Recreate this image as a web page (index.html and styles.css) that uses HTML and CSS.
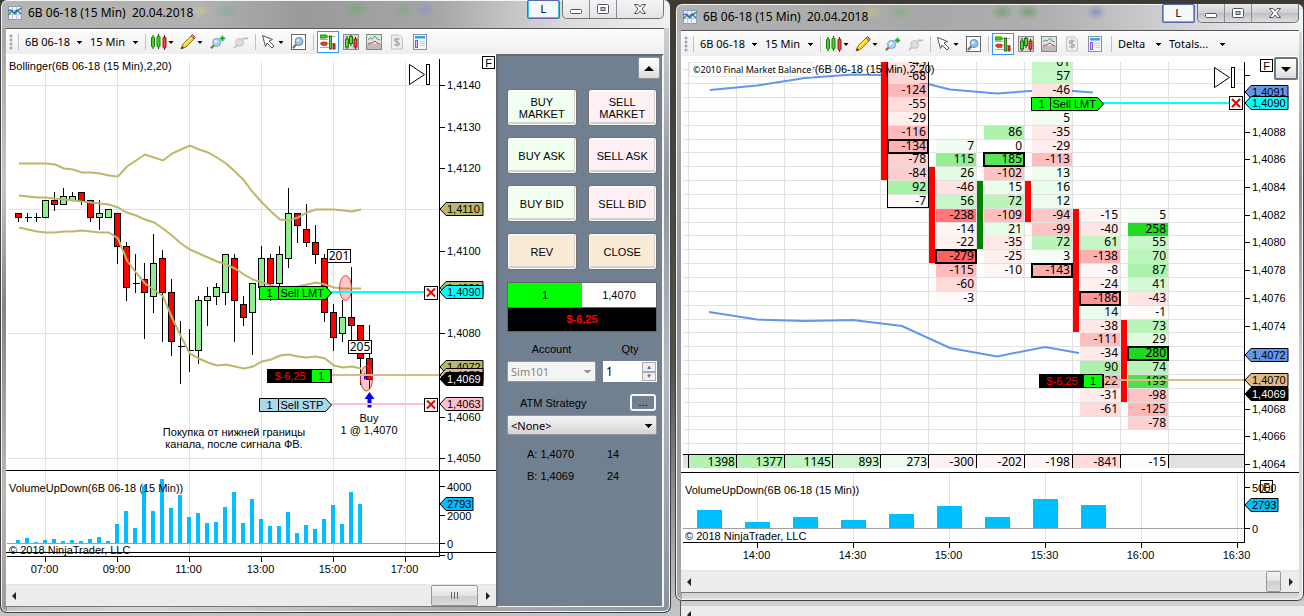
FILE: index.html
```html
<!DOCTYPE html>
<html lang="en">
<head>
  <meta charset="UTF-8" />
  <title>6B 06-18 (15 Min)</title>
  <link rel="stylesheet" href="styles.css">
</head>
<body>

  <!-- icons -->
  <svg class="sprite" aria-hidden="true">
    <symbol id="i-logo" viewBox="0 0 14 14">
      <rect x=".5" y=".5" width="13" height="13" fill="#eef3fb" stroke="#8c9bb5"/>
      <path d="M.5 4.5h13M.5 8.5h13M4.5 .5v13M8.5 .5v13" stroke="#b9c6dd"/>
      <path d="M0 9l4-4 3 3 3-4 4-2" fill="none" stroke="#2f9e2f" stroke-width="1.400"/>
      <path d="M0 5l3-1 3 3 3-3 4 4" fill="none" stroke="#2d5fc4" stroke-width="1.200"/>
    </symbol>
    <symbol id="i-candles" viewBox="0 0 16 16">
      <path d="M2 1v14M7.500 0v15M13.500 1v15" stroke="#333"/>
      <rect x=".5" y="3" width="3" height="10" rx="1" fill="#3ddc1e" stroke="#18780c"/>
      <rect x="6" y="2" width="3" height="11" rx="1" fill="#3ddc1e" stroke="#18780c"/>
      <rect x="12" y="3" width="3" height="11" rx="1" fill="#f0453a" stroke="#8e1a14"/>
    </symbol>
    <symbol id="i-pencil" viewBox="0 0 16 16">
      <path d="M1 15l2-5 9-9 3 3-9 9z" fill="#ffd21c" stroke="#8f7a28"/>
      <path d="M4 11l9-9" stroke="#fff3a0"/>
      <path d="M11 2l1.500-1.500 3 3L14 5z" fill="#e8887c" stroke="#8f5a50"/>
      <path d="M1 15l1-3 2 2z" fill="#333"/>
    </symbol>
    <symbol id="i-zoomin" viewBox="0 0 18 16">
      <path d="M5 11l-4 4" stroke="#9a6a35" stroke-width="2.500"/>
      <circle cx="7.500" cy="8.500" r="4.500" fill="#a5d3f3" stroke="#8094a8"/>
      <circle cx="6.500" cy="7.500" r="2" fill="#dff2ff"/>
      <path d="M14 1v6M11 4h6" stroke="#0ca52e" stroke-width="2"/>
    </symbol>
    <symbol id="i-zoomout" viewBox="0 0 18 16">
      <path d="M5 11l-4 4" stroke="#c8c8c8" stroke-width="2.500"/>
      <circle cx="7.500" cy="8.500" r="4.500" fill="#dcdcdc" stroke="#bdbdbd"/>
      <path d="M11 4h6" stroke="#bcbcbc" stroke-width="2"/>
    </symbol>
    <symbol id="i-cursor" viewBox="0 0 16 16">
      <path d="M1.500 1.500l10 4-3.500 1.500 5 5-2 2-5-5-1.500 3.500z" fill="#fff" stroke="#555"/>
    </symbol>
    <symbol id="i-page" viewBox="0 0 16 16">
      <rect x=".5" y=".5" width="14" height="15" fill="#fff" stroke="#666"/>
      <path d="M5.500 10l-3.500 4" stroke="#777" stroke-width="2.500"/>
      <circle cx="8" cy="7.500" r="4" fill="#90c6ee" stroke="#708ba5"/>
      <circle cx="7" cy="6.500" r="1.500" fill="#d6eeff"/>
    </symbol>
    <symbol id="i-trader" viewBox="0 0 16 16">
      <path d="M6 2.500h9M0 5.500h8M7 9.500h8M0 13.500h9" stroke="#aaa"/>
      <path d="M0 1h6l2 1.500L6 4H0z" fill="#3fd324" stroke="#238b12"/>
      <path d="M0 9.500L2 8h5v3.500H2z" fill="#e8382d" stroke="#a82018" stroke-width=".5"/>
      <rect x="9.500" y="2" width="2" height="13" fill="#52d835" stroke="#2b7a20"/>
      <rect x="13" y="10" width="2" height="5" fill="#e8382d" stroke="#912018"/>
    </symbol>
    <symbol id="i-bars" viewBox="0 0 16 16">
      <rect x=".5" y=".5" width="15" height="15" fill="#d9d9d9" stroke="#8a8a8a"/>
      <path d="M1 4.500h14M1 8h14M1 11.500h14" stroke="#f5f5f5"/>
      <path d="M4 2v13M8 1v11M12.500 3v12" stroke="#222"/>
      <rect x="2.500" y="5" width="3" height="8" fill="#52dc30" stroke="#23721a"/>
      <rect x="6.500" y="2.500" width="3" height="7" fill="#52dc30" stroke="#23721a"/>
      <rect x="11" y="5" width="3" height="8" fill="#f04a3c" stroke="#8d211a"/>
    </symbol>
    <symbol id="i-lines" viewBox="0 0 16 16">
      <rect x=".5" y=".5" width="15" height="15" fill="#e2e2e2" stroke="#888"/>
      <rect x="1" y="10" width="14" height="5" fill="#bcbcbc"/>
      <path d="M2 6l2-2 2 1 3-3 2 3 3 1" fill="none" stroke="#37ab7a"/>
      <path d="M2 10l2-1 2 0 3-2 2 2 3 1" fill="none" stroke="#e03b3b"/>
    </symbol>
    <symbol id="i-money" viewBox="0 0 16 16">
      <path d="M2.500 1h8l3 3v11h-11z" fill="#eee" stroke="#c4c4c4"/>
      <path d="M10.500 5.500c-1-1-5-1.300-5 .7s5 1.300 5 3.600-4.500 1.700-5.300.4M8 3.500v9" fill="none" stroke="#aaa" stroke-width="1.400"/>
    </symbol>
    <symbol id="i-form" viewBox="0 0 16 16">
      <rect x="1.500" y=".5" width="13" height="15" fill="#f2f5fa" stroke="#8090a8"/>
      <rect x="3" y="2" width="10" height="2.500" fill="#3b9fe3"/>
      <rect x="3.500" y="6.500" width="2" height="7" fill="#d9c4ff" stroke="#8a4df0"/>
      <path d="M8 7.500h5M8 9.500h5M8 11.500h5" stroke="#c8d0dc"/>
    </symbol>
    <symbol id="i-min" viewBox="0 0 12 12"><rect x=".5" y="6.500" width="11" height="4" rx="1" fill="#fff" stroke="#4f5566"/></symbol>
    <symbol id="i-max" viewBox="0 0 12 12">
      <rect x=".5" y="1.500" width="11" height="9" rx="1" fill="#fff" stroke="#4f5566"/>
      <rect x="4" y="4.500" width="4" height="3" fill="#ccc" stroke="#4f5566"/>
    </symbol>
    <symbol id="i-close" viewBox="0 0 12 12">
      <path d="M.5 1.500h3.500l2 2.500 2-2.500h3.500L8 6l3.500 4.500H8L6 8l-2 2.500H.5L4 6z" fill="#fff" stroke="#4f5566"/>
    </symbol>
    <symbol id="i-caret" viewBox="0 0 8 16"><path d="M1.500 7h5L4 10z" fill="#000"/></symbol>
    <symbol id="i-left" viewBox="0 0 8 8"><path d="M6 0v8L2 4z" fill="#222"/></symbol>
    <symbol id="i-right" viewBox="0 0 8 8"><path d="M2 0v8l4-4z" fill="#222"/></symbol>
    <symbol id="i-up" viewBox="0 0 10 10"><path d="M0 8h10L5 3z" fill="#000"/></symbol>
    <symbol id="i-down" viewBox="0 0 10 10"><path d="M0 3h10L5 8z" fill="#000"/></symbol>
  </svg>

  <div class="desktop">

    <section class="window window-left">
      <header class="titlebar">
        <svg class="logo"><use href="#i-logo"/></svg>
        <h1>6B 06-18 (15 Min)&nbsp; 20.04.2018</h1>
        <button class="link-btn">L</button>
        <div class="win-btns">
          <button aria-label="Minimize"><svg><use href="#i-min"/></svg></button>
          <button aria-label="Maximize"><svg><use href="#i-max"/></svg></button>
          <button class="close" aria-label="Close"><svg><use href="#i-close"/></svg></button>
        </div>
      </header>
      <div class="content">
        <nav class="toolbar">
          <span class="grip"></span>
          <span class="sep"></span>
          <select class="instrument" aria-label="Instrument"><option>6B 06-18</option></select>
          <select class="interval" aria-label="Interval"><option>15 Min</option></select>
          <span class="sep"></span>
          <button class="tool drop" aria-label="Chart style"><svg><use href="#i-candles"/></svg><svg class="caret"><use href="#i-caret"/></svg></button>
          <button class="tool drop" aria-label="Drawing tools"><svg><use href="#i-pencil"/></svg><svg class="caret"><use href="#i-caret"/></svg></button>
          <button class="tool" aria-label="Zoom in"><svg><use href="#i-zoomin"/></svg></button>
          <button class="tool" aria-label="Zoom out"><svg><use href="#i-zoomout"/></svg></button>
          <span class="sep"></span>
          <button class="tool drop" aria-label="Cursor"><svg><use href="#i-cursor"/></svg><svg class="caret"><use href="#i-caret"/></svg></button>
          <button class="tool" aria-label="Data box"><svg><use href="#i-page"/></svg></button>
          <span class="sep"></span>
          <div class="tool-group">
            <button class="tool active" aria-label="Chart trader"><svg><use href="#i-trader"/></svg></button>
            <button class="tool" aria-label="Data series"><svg><use href="#i-bars"/></svg></button>
            <button class="tool" aria-label="Indicators"><svg><use href="#i-lines"/></svg></button>
            <button class="tool" aria-label="Strategies"><svg><use href="#i-money"/></svg></button>
            <button class="tool" aria-label="Properties"><svg><use href="#i-form"/></svg></button>
          </div>
        </nav>
        <div class="main">
          <div class="chart-col">
            <svg class="chart" id="priceChart" viewBox="6 54 490 530"></svg>
            <div class="scroll">
              <button aria-label="Scroll left"><svg><use href="#i-left"/></svg></button>
              <span class="track"><span class="thumb"></span></span>
              <button aria-label="Scroll right"><svg><use href="#i-right"/></svg></button>
            </div>
          </div>
          <aside class="trader">
            <button class="collapse" aria-label="Collapse"><svg><use href="#i-up"/></svg></button>
            <div class="orders">
              <button class="buy">BUY MARKET</button>
              <button class="sell">SELL MARKET</button>
              <button class="buy">BUY ASK</button>
              <button class="sell">SELL ASK</button>
              <button class="buy">BUY BID</button>
              <button class="sell">SELL BID</button>
              <button class="flat">REV</button>
              <button class="flat">CLOSE</button>
            </div>
            <div class="position">
              <span class="size">1</span>
              <span class="entry">1,4070</span>
              <span class="pnl">$-6,25</span>
            </div>
            <div class="fields">
              <label for="account">Account</label>
              <label for="qty">Qty</label>
              <select id="account" disabled><option>Sim101</option></select>
              <div class="qty">
                <input id="qty" type="text" value="1">
                <button class="spin-up" aria-label="Increase">▲</button>
                <button class="spin-down" aria-label="Decrease">▼</button>
              </div>
            </div>
            <div class="atm">
              <label for="atm">ATM Strategy</label>
              <button>...</button>
            </div>
            <select id="atm"><option>&lt;None&gt;</option></select>
            <dl class="quotes">
              <dt>A: 1,4070</dt><dd>14</dd>
              <dt>B: 1,4069</dt><dd>24</dd>
            </dl>
          </aside>
        </div>
      </div>
    </section>

    <div class="right-col">
      <section class="window window-right">
        <header class="titlebar">
          <svg class="logo"><use href="#i-logo"/></svg>
          <h1>6B 06-18 (15 Min)&nbsp; 20.04.2018</h1>
          <button class="link-btn">L</button>
          <div class="win-btns">
            <button aria-label="Minimize"><svg><use href="#i-min"/></svg></button>
            <button aria-label="Maximize"><svg><use href="#i-max"/></svg></button>
            <button class="close" aria-label="Close"><svg><use href="#i-close"/></svg></button>
          </div>
        </header>
        <div class="content">
          <nav class="toolbar">
            <span class="grip"></span>
            <span class="sep"></span>
            <select class="instrument" aria-label="Instrument"><option>6B 06-18</option></select>
            <select class="interval" aria-label="Interval"><option>15 Min</option></select>
            <span class="sep"></span>
            <button class="tool drop" aria-label="Chart style"><svg><use href="#i-candles"/></svg><svg class="caret"><use href="#i-caret"/></svg></button>
            <button class="tool drop" aria-label="Drawing tools"><svg><use href="#i-pencil"/></svg><svg class="caret"><use href="#i-caret"/></svg></button>
            <button class="tool" aria-label="Zoom in"><svg><use href="#i-zoomin"/></svg></button>
            <button class="tool" aria-label="Zoom out"><svg><use href="#i-zoomout"/></svg></button>
            <span class="sep"></span>
            <button class="tool drop" aria-label="Cursor"><svg><use href="#i-cursor"/></svg><svg class="caret"><use href="#i-caret"/></svg></button>
            <button class="tool" aria-label="Data box"><svg><use href="#i-page"/></svg></button>
            <span class="sep"></span>
            <div class="tool-group">
              <button class="tool active" aria-label="Chart trader"><svg><use href="#i-trader"/></svg></button>
              <button class="tool" aria-label="Data series"><svg><use href="#i-bars"/></svg></button>
              <button class="tool" aria-label="Indicators"><svg><use href="#i-lines"/></svg></button>
              <button class="tool" aria-label="Strategies"><svg><use href="#i-money"/></svg></button>
              <button class="tool" aria-label="Properties"><svg><use href="#i-form"/></svg></button>
            </div>
            <span class="sep"></span>
            <select class="delta" aria-label="Mode"><option>Delta</option></select>
            <select class="totals" aria-label="Totals"><option>Totals...</option></select>
          </nav>
          <div class="main">
            <div class="chart-col">
              <svg class="chart" id="deltaChart" viewBox="681 56 618 514"></svg>
              <button class="collapse over" aria-label="Expand"><svg><use href="#i-down"/></svg></button>
              <div class="scroll small">
                <button aria-label="Scroll left"><svg><use href="#i-left"/></svg></button>
                <span class="track"><span class="thumb"></span></span>
                <button aria-label="Scroll right"><svg><use href="#i-right"/></svg></button>
              </div>
            </div>
          </div>
        </div>
      </section>
      <div class="behind"><svg><use href="#i-left"/></svg></div>
    </div>

  </div>

  <script src="chart.js"></script>
</body>
</html>
```
FILE: styles.css
```css
* {
  box-sizing: border-box;
}
body {
  margin: 0;
  min-height: 100vh;
  overflow: hidden;
  background: #4a4944;
  font-family: "Liberation Sans", Arial, sans-serif;
  font-size: 11px;
  color: #000;
}
button, select, input {
  font: inherit;
  color: inherit;
  margin: 0;
  padding: 0;
}
.sprite {
  position: absolute;
  width: 0;
  height: 0;
}
.desktop {
  display: grid;
  grid-template-columns: 671fr 629fr;
  gap: 4px;
  align-items: start;
  min-height: 100vh;
  background: linear-gradient(#3c3a32, #55534c 60%, #c4c4c4 99%);
}

/* windows */
.window {
  border: 1px solid #3d4047;
  border-radius: 7px;
  box-shadow: inset 0 0 0 1px #f4f4f4;
}
.window-left {
  padding: 0 6px 5px 5px;
  border-top: 0;
  background:
    linear-gradient(#0000 28px, #cfd2d2 28px, #8f9498 30%, #b4bbc0 60%, #8a949c) right / 7px 100% no-repeat,
    linear-gradient(#0000 28px, #a9a79c 28px, #c6c6bd 30%, #85857c 50%, #bdbbb0 80%, #9a9a90) left / 6px 100% no-repeat,
    linear-gradient(90deg, #c4c4c0, #d6d6d6 20%, #a9acae 70%, #8b959d) bottom / 100% 6px no-repeat,
    radial-gradient(ellipse 12px 8px at 198px 11px, #c0c39a, #0000),
    radial-gradient(ellipse 12px 8px at 226px 11px, #8cae9c, #0000),
    radial-gradient(ellipse 12px 8px at 355px 10px, #7aa77c, #0000),
    radial-gradient(ellipse 10px 8px at 402px 10px, #88a988, #0000),
    radial-gradient(ellipse 10px 8px at 424px 10px, #9497bd, #0000),
    linear-gradient(90deg, #b5b5b3 0, #b0b0b0 30%, #9a9a9a 45%, #a6a6a6 65%, #dcdcdc 85%, #f0f0f0);
}
.window-right {
  padding: 0 4px 7px 5px;
  background:
    linear-gradient(#0000 28px, #b9babb 28px, #8e9194 50%, #a5a7a8) left / 6px 100% no-repeat,
    linear-gradient(#0000 28px, #dcdcdc 28px, #8c8c8c 30%, #cfcfcf 60%, #e0e0e0) right / 5px 100% no-repeat,
    linear-gradient(#cfcfcf, #e2e2e2) bottom / 100% 7px no-repeat,
    radial-gradient(ellipse 12px 8px at 195px 8px, #b9bc90, #0000),
    radial-gradient(ellipse 12px 8px at 225px 8px, #86b086, #0000),
    radial-gradient(ellipse 12px 8px at 326px 8px, #7ba27b, #0000),
    radial-gradient(ellipse 12px 8px at 352px 8px, #7b9e7b, #0000),
    radial-gradient(ellipse 10px 8px at 420px 8px, #8c94bd, #0000),
    linear-gradient(90deg, #b2b2b2, #a8a8a8 40%, #b0b0b0 60%, #dadada 85%, #f2f2f2);
}
.right-col {
  padding-top: 3px;
}
.behind {
  height: 16px;
  margin-left: 5px;
  padding: 10px 4px 0;
  border-left: 1px solid #555;
  background: linear-gradient(#cfcfcf 4px, #aaa 4px, #ececec 5px);
}
.behind svg {
  display: block;
  width: 8px;
  height: 8px;
}
.titlebar {
  display: flex;
  align-items: flex-start;
  height: 28px;
}
.window-right .titlebar {
  height: 26px;
}
.logo {
  width: 14px;
  height: 14px;
  margin: 6px 6px 0 2px;
}
.titlebar h1 {
  flex: 1;
  margin: 5px 0 0;
  font: 12px/15px "Noto Sans", "Open Sans", sans-serif;
  white-space: nowrap;
}
.link-btn {
  width: 33px;
  height: 19px;
  border: 2px solid #38c5ee;
  border-top-width: 1px;
  border-radius: 2px;
  background: #f6f9fb;
  outline: 1px solid #5a66b0;
  outline-offset: -1px;
}
.win-btns {
  display: flex;
  margin-left: 2px;
  border: 1px solid #70757c;
  border-top: 0;
  border-radius: 0 0 5px 5px;
  background: linear-gradient(#e9e9e9, #cfcfcf 50%, #bfbfbf 50%, #dedede);
}
.window-left .win-btns {
  background: linear-gradient(#f4f4f4, #e4e4e4);
}
.win-btns button {
  width: 27px;
  height: 18px;
  border: 0;
  border-right: 1px solid #8a8f96;
  background: none;
}
.win-btns .close {
  width: 46px;
  border-right: 0;
}
.win-btns svg {
  display: block;
  width: 12px;
  height: 12px;
  margin: 0 auto;
}
.content {
  border: 1px solid #55585e;
  border-width: 1px 0 0;
  background: #fff;
}

/* toolbar */
.toolbar {
  display: flex;
  align-items: center;
  gap: 5px;
  height: 25px;
  padding-left: 3px;
  background: linear-gradient(#fdfdfd, #eeeeee);
  font-family: "Noto Sans", "Open Sans", sans-serif;
  font-size: 11px;
}
.grip {
  width: 4px;
  height: 16px;
  background: radial-gradient(#aaa 1px, #0000 2px) 0 0 / 4px 4px;
}
.sep {
  width: 1px;
  height: 16px;
  background: #c2c2c2;
}
.toolbar select {
  height: 20px;
  padding-left: 1px;
  border: 0;
  appearance: none;
  background:
    linear-gradient(#000, #000) right 2px top 9px / 5px 1px no-repeat,
    linear-gradient(#000, #000) right 3px top 10px / 3px 1px no-repeat,
    linear-gradient(#000, #000) right 4px top 11px / 1px 1px no-repeat;
}
.instrument {
  width: 60px;
}
.interval {
  width: 51px;
}
.delta {
  width: 46px;
}
.totals {
  width: 59px;
}
.tool {
  display: flex;
  align-items: center;
  justify-content: center;
  width: 18px;
  height: 22px;
  border: 0;
  background: none;
}
.tool svg {
  width: 16px;
  height: 16px;
}
.tool.drop {
  width: 24px;
}
.tool .caret {
  width: 8px;
}
.tool-group {
  display: flex;
  gap: 1px;
  margin-left: -2px;
}
.tool-group .tool {
  width: 22px;
}
.tool.active {
  border: 1px solid #3399ff;
  background: #fff;
}

/* charts */
.main {
  display: flex;
}
.chart-col {
  position: relative;
  flex: 1;
  min-width: 0;
}
.chart {
  display: block;
  width: 100%;
  background: #fff;
}
.chart text {
  font-family: "Liberation Sans", Arial, sans-serif;
  font-size: 11px;
}
.chart .num {
  font-family: "Noto Sans", "Open Sans", sans-serif;
  font-size: 12px;
}
.chart .note {
  font-family: "Noto Sans", "Open Sans", sans-serif;
  font-size: 9px;
}
.chart .mid {
  text-anchor: middle;
}
.chart .end {
  text-anchor: end;
}
.chart rect, .chart line {
  shape-rendering: crispEdges;
}
.scroll {
  display: flex;
  align-items: center;
  height: 23px;
  padding: 0 4px;
  border-top: 1px solid #e4e4e4;
  border-bottom: 1px solid #777;
  background: #ececec;
}
.scroll button {
  width: 8px;
  height: 8px;
  border: 0;
  background: none;
}
.scroll svg {
  display: block;
  width: 8px;
  height: 8px;
}
.track {
  display: flex;
  flex: 1;
  justify-content: flex-end;
  padding-right: 6px;
}
.thumb {
  width: 47px;
  height: 21px;
  border: 1px solid #979797;
  border-radius: 2px;
  background:
    repeating-linear-gradient(90deg, #666 0 1px, #0000 1px 3px) 19px 6px / 8px 7px no-repeat,
    linear-gradient(#f6f6f6, #e2e2e2 50%, #cdcdcd 50%, #dcdcdc);
}
.small .thumb {
  width: 15px;
  background: linear-gradient(#f4f4f4, #e4e4e4 50%, #cfcfcf 50%, #dedede);
}

/* chart trader */
.trader {
  display: flex;
  flex-direction: column;
  width: 168px;
  padding: 1px 5px 0 9px;
  border: 2px solid #666a70;
  border-width: 2px 2px 1px;
  border-right-color: #f4f4f4;
  border-bottom-color: #f4f4f4;
  background: #708090;
}
.collapse {
  align-self: flex-end;
  width: 22px;
  height: 22px;
  margin-right: -3px;
  border: 1px solid #8d9298;
  border-radius: 2px;
  background: linear-gradient(#fff, #f0f0f0 50%, #dcdcdc);
}
.collapse svg {
  display: block;
  width: 10px;
  height: 10px;
  margin: 0 auto;
}
.collapse.over {
  position: absolute;
  top: 1px;
  right: 1px;
  width: 24px;
  height: 23px;
  margin: 0;
  border: 2px solid #6d7784;
}
.orders {
  display: grid;
  grid-template-columns: 1fr 1fr;
  gap: 11px;
  margin-top: 10px;
}
.orders button {
  height: 37px;
  padding: 0 8px;
  border: 1px solid #74706e;
  border-radius: 3px;
  box-shadow: inset 0 0 0 1px #fff, inset -1px -2px 0 1px #d0d0d0;
  line-height: 12px;
}
.buy {
  background: #f0fff0;
}
.sell {
  background: #fff0f5;
}
.flat {
  background: #faebd7;
}
.position {
  display: grid;
  grid-template-columns: 1fr 1fr;
  margin-top: 12px;
  border: 1px solid #666;
  text-align: center;
  line-height: 24px;
}
.size {
  background: #00ff00;
}
.entry {
  background: #fff;
}
.pnl {
  grid-column: span 2;
  border-top: 1px solid #666;
  background: #000;
  color: #ff0000;
  font-weight: bold;
  line-height: 23px;
}
.fields {
  display: grid;
  grid-template-columns: 89px 1fr;
  gap: 5px 7px;
  margin-top: 10px;
  text-align: center;
  line-height: 14px;
}
.fields select, .qty {
  height: 21px;
}
.fields select, #atm {
  border: 1px solid #999;
  border-radius: 2px;
  appearance: none;
  padding-left: 3px;
  font-family: "Noto Sans", "Open Sans", sans-serif;
  font-size: 11px;
}
#account {
  color: #838383;
  opacity: 1;
  background:
    linear-gradient(#999, #999) right 4px top 8px / 7px 1px no-repeat,
    linear-gradient(#999, #999) right 5px top 9px / 5px 1px no-repeat,
    linear-gradient(#999, #999) right 6px top 10px / 3px 1px no-repeat,
    #f4f4f4;
}
.qty {
  display: grid;
  grid-template-columns: 1fr 14px;
  grid-template-rows: 1fr 1fr;
  padding: 1px;
  background: #fff;
}
.qty input {
  grid-row: span 2;
  min-width: 0;
  padding: 0 2px;
  border: 0;
  background: none;
  font-family: "Noto Sans", "Open Sans", sans-serif;
  font-size: 12px;
}
.qty button {
  border: 1px solid #aaa;
  background: #f0f0f0;
  color: #4a66b0;
  font-size: 6px;
  line-height: 6px;
}
.atm {
  display: flex;
  justify-content: space-between;
  align-items: center;
  margin: 12px 1px 4px 13px;
}
.atm button {
  width: 26px;
  height: 17px;
  border: 2px solid #f4f4f4;
  border-radius: 3px;
  background: #708090;
  line-height: 11px;
}
#atm {
  width: 100%;
  height: 20px;
  background:
    linear-gradient(#000, #000) right 4px top 8px / 7px 1px no-repeat,
    linear-gradient(#000, #000) right 5px top 9px / 5px 1px no-repeat,
    linear-gradient(#000, #000) right 6px top 10px / 3px 1px no-repeat,
    linear-gradient(#000, #000) right 7px top 11px / 1px 1px no-repeat,
    linear-gradient(#f6f6f6, #e6e6e6 50%, #d2d2d2);
}
.quotes {
  display: grid;
  grid-template-columns: 80px 1fr;
  gap: 8px 0;
  margin: 12px 0 0 20px;
  line-height: 14px;
}
.quotes dd {
  margin: 0;
}
```
FILE: chart.js
```js
const GRID = "#e1e1e1";
const UP = "#90ee90";
const DOWN = "#ff0000";
const BAND = "#bdb76b";
const BLUE = "#6495ed";

function line(x1, y1, x2, y2, color, width) {
  return `<line x1="${x1}" y1="${y1}" x2="${x2}" y2="${y2}" stroke="${color || "#000"}" stroke-width="${width || 1}"/>`;
}

function rect(x, y, w, h, fill, stroke) {
  return `<rect x="${x}" y="${y}" width="${w}" height="${h}" fill="${fill}" ${stroke ? `stroke="${stroke}"` : ""}/>`;
}

// y is the middle of the text
function text(x, y, s, cls, fill) {
  return `<text x="${x}" y="${y + 4}" class="${cls || ""}" fill="${fill || "#000"}">${s}</text>`;
}

function curve(points, color) {
  return `<polyline points="${points.map(p => p.join(",")).join(" ")}" fill="none" stroke="${color}" stroke-width="2"/>`;
}

// price marker on the axis
function tag(x, y, s, fill, color, w) {
  const r = x + (w || 43);
  return `<path d="M${x} ${y}l6 -6.500H${r}v13H${x + 6}z" fill="${fill}" stroke="#000"/>` + text(x + 7, y, s, "", color);
}

function order(x, y, s, fill) {
  return `<path d="M${x} ${y - 6.5}h66l6 6.500l-6 6.500h-66z" fill="${fill}" stroke="#000"/>` +
    line(x + 19, y - 6, x + 19, y + 6) + text(x + 10, y, "1", "mid") + text(x + 21, y, s);
}

function cancel(x, y) {
  return rect(x, y - 6.5, 13, 13, "#fff", "#000") +
    `<path d="M${x + 2.5} ${y - 4}l8 8m0 -8l-8 8" stroke="#f00000" stroke-width="2"/>`;
}

function pnl(x, y) {
  return rect(x, y - 6.5, 64, 13, "#000", "#000") + rect(x + 44.5, y - 6.5, 19, 13, "#00ff00", "#000") +
    text(x + 23, y, "$-6,25", "mid", "#ff0000") + text(x + 54, y, "1", "mid");
}

function playIcon(x, y) {
  return `<path d="M${x} ${y}v20l15 -10z" fill="#fff" stroke="#000"/>` + rect(x + 17, y, 3, 20, "#fff", "#000");
}

function fBox(x, y) {
  return rect(x, y, 12, 12, "#fff", "#000") + text(x + 6, y + 6, "F", "mid");
}

// [type, body top, body bottom, high, low]
const candles = [
  ["d", 213, 217, 213, 221], ["x", 217, 217, 213, 221], ["x", 217, 217, 213, 221], ["u", 200, 217, 200, 217],
  ["d", 200, 204, 192, 210], ["u", 196, 204, 188, 204], ["u", 196, 200, 192, 200], ["d", 192, 200, 192, 204],
  ["d", 200, 217, 200, 221], ["u", 213, 217, 200, 229], ["u", 209, 217, 209, 217], ["d", 213, 246, 213, 263],
  ["d", 246, 287, 242, 300], ["x", 283, 283, 254, 292], ["d", 279, 292, 263, 338], ["u", 263, 296, 234, 312],
  ["d", 258, 292, 250, 341], ["d", 292, 341, 279, 355], ["x", 346, 346, 321, 383], ["x", 350, 350, 329, 371],
  ["u", 300, 350, 296, 363], ["u", 296, 300, 287, 325], ["u", 287, 296, 283, 304], ["u", 254, 292, 254, 304],
  ["d", 258, 300, 254, 341], ["d", 304, 317, 296, 325], ["u", 283, 312, 283, 354], ["u", 258, 287, 246, 287],
  ["d", 258, 283, 254, 300], ["u", 254, 283, 246, 287], ["u", 213, 258, 188, 267], ["d", 213, 225, 213, 242],
  ["d", 229, 242, 204, 246], ["d", 242, 254, 225, 263], ["d", 258, 312, 254, 321], ["d", 312, 337, 304, 350],
  ["u", 317, 333, 300, 341], ["d", 317, 325, 267, 345], ["d", 325, 358, 325, 384], ["d", 358, 379, 325, 388]
];
const upper = [163, 163, 163, 163, 164, 168, 169, 172, 172, 173, 175, 176, 166, 160, 154, 157, 160, 153, 149, 145,
  149, 152, 157, 163, 171, 180, 192, 202, 211, 219, 220, 217, 212, 209, 209, 209, 210, 211, 209];
const middle = [195, 196, 197, 197, 198, 199, 200, 201, 202, 203, 204, 207, 212, 215, 219, 222, 228, 235, 243, 249,
  253, 257, 261, 264, 268, 274, 279, 282, 285, 287, 287, 286, 284, 282, 284, 287, 288, 288, 288];
const lower = [227, 229, 231, 232, 232, 231, 231, 230, 231, 232, 232, 238, 260, 272, 283, 289, 296, 317, 336, 353,
  358, 362, 365, 364, 366, 368, 366, 361, 359, 355, 354, 356, 357, 356, 358, 365, 367, 366, 368];
const volume = [3, 5, 1, 3, 4, 2, 3, 2, 4, 6, 2, 19, 32, 15, 57, 32, 64, 35, 48, 26, 30, 20, 21, 36, 51, 20, 44, 24,
  17, 17, 31, 10, 18, 14, 24, 38, 19, 51, 39];

function drawPriceChart() {
  let s = "";
  const times = ["07:00", "09:00", "11:00", "13:00", "15:00", "17:00"];
  times.forEach((t, i) => {
    const x = 45.5 + i * 72;
    s += line(x, 62, x, 556, GRID) + line(x, 557, x, 562) + text(x - 1, 569, t, "mid");
  });
  [85, 209, 333, 458].forEach(y => s += line(8, y + 0.5, 439, y + 0.5, GRID));

  candles.forEach((c, i) => {
    const x = 18.5 + i * 9;
    s += line(x, c[3], x, c[4] + 1);
    if (c[0] === "x") s += line(x - 3, c[1] + 0.5, x + 4, c[1] + 0.5);
    else s += rect(x - 3, c[1] + 0.5, 6, c[2] - c[1], c[0] === "u" ? UP : DOWN, "#000");
  });
  [upper, middle, lower].forEach(b => s += curve(b.map((y, i) => [19 + i * 9, y + 0.5]), BAND));

  // signals
  s += '<ellipse cx="345.500" cy="288" rx="6" ry="12.500" fill="#ff000038" stroke="#dc4040"/>';
  s += '<path d="M364 373l5 3l-5 4z" fill="#0000ff"/>';
  s += '<ellipse cx="366.500" cy="378.500" rx="6" ry="12.500" fill="#ff000038" stroke="#dc4040"/>';
  s += rect(327.5, 249.5, 23, 13, "#fff", "#000") + text(339, 256, "201", "num mid");
  s += rect(348.5, 340.5, 23, 13, "#fff", "#000") + text(360, 347, "205", "num mid");
  s += '<path d="M369.500 392l5 7h-3v4h-4v-4h-3zM367.500 404.500h4v3h-4z" fill="#0000ff"/>';
  s += text(369, 418, "Buy", "mid") + text(369, 430, "1 @ 1,4070", "mid");
  s += text(234, 432, "Покупка от нижней границы", "mid") + text(234, 444, "канала, после сигнала ФВ.", "mid");

  // orders
  s += line(331, 292, 424, 292, "#00ffff", 2) + order(259.5, 293, "Sell LMT", "#00ff00") + cancel(424.5, 292.5);
  s += line(331, 404, 424, 404, "#ffc0cb", 2) + order(259.5, 405, "Sell STP", "#add8e6") + cancel(424.5, 404.5);
  s += line(331, 375, 440, 375, "#deb887", 2) + pnl(267, 376);

  // price axis
  s += line(439.5, 59, 439.5, 557);
  [["1,4140", 85], ["1,4130", 127], ["1,4120", 168], ["1,4100", 251], ["1,4080", 333], ["1,4060", 417], ["1,4050", 458]]
    .forEach(t => s += line(440, t[1] + 0.5, 445, t[1] + 0.5) + text(447, t[1], t[0]));
  s += tag(440, 209, "1,4110", BAND) + tag(440, 288, "1,4091", BAND) + tag(440, 292, "1,4090", "#00ffff");
  s += tag(440, 367, "1,4072", BAND) + tag(440, 375, "1,4070", "#deb887") + tag(440, 379, "1,4069", "#000", "#fff");
  s += tag(440, 404, "1,4063", "#ffc0cb");

  // volume
  s += line(6, 470.5, 496, 470.5) + line(7, 543.5, 439, 543.5, "#a0a0a0");
  volume.forEach((v, i) => s += rect(16 + i * 9, 543 - v, 4, v, "#00bfff"));
  s += line(6, 552.5, 496, 552.5) + line(7, 556.5, 440, 556.5);
  [["4000", 486], ["2000", 515], ["0", 543], ["0", 555]]
    .forEach(t => s += line(440, t[1] + 0.5, 445, t[1] + 0.5) + text(447, t[1] + 1, t[0]));
  s += tag(440, 504, "2793", "#00bfff", "#000", 33);

  s += text(9, 66, "Bollinger(6B 06-18 (15 Min),2,20)");
  s += text(9, 488, "VolumeUpDown(6B 06-18 (15 Min))");
  s += text(9, 550, "© 2018 NinjaTrader, LLC");
  s += playIcon(409.5, 64.5) + fBox(482.5, 56.5);
  document.getElementById("priceChart").innerHTML = s;
}

// delta per price, from the top price down (ticks above 1.4000)
const columns = [
  { top: 93, box: 87, bar: [94, 85, "red"], v: [-43, -68, -124, -55, -29, -116, -134, -78, -84, 92, -7] },
  { top: 87, box: 79, bar: [85, 79, "red"], v: [7, 115, 26, -46, 56, -238, -14, -22, -279, -115, -60, -3] },
  { top: 88, box: 86, bar: [84, 80, "green"], v: [86, 0, 185, -102, 15, 72, -109, 21, -35, -25, -10] },
  { top: 93, box: 78, bar: [84, 82, "red"], v: [61, 57, -46, null, 5, -35, -29, -113, 13, 16, 12, -94, -99, 72, 3, -143] },
  { top: 82, box: 76, bar: [82, 74, "red"], v: [-15, -40, 61, -138, -8, -24, -186, 14, -38, -111, -34, 90, -122, -31, -61] },
  { top: 82, box: 72, bar: [74, 69, "red"], v: [5, 258, 55, 70, 87, 41, -43, -1, 73, 29, 280, 74, 199, -98, -125, -78] }
];
const totals = [1398, 1377, 1145, 893, 273, -300, -202, -198, -841, -15];
const barTops = [510, 522, 517, 520, 514, 506, 517, 499, 505];

function priceY(p) {
  return 464 - (p - 64) * 13.85;
}

function shade(v) {
  if (v === 0) return "#fff";
  if (v < 0) {
    const c = Math.round(Math.max(90, 252 + v * 0.56));
    return `rgb(255,${c},${c})`;
  }
  const c = Math.round(Math.max(34, 248 - v * 0.86));
  return `rgb(${c},${Math.round(254 - v * 0.14)},${c})`;
}

function drawDeltaChart() {
  let s = '<defs><clipPath id="plot"><rect x="681" y="62" width="618" height="510"/></clipPath></defs><g clip-path="url(#plot)">';
  for (let p = 64; p < 94; p++) {
    const y = Math.round(priceY(p + 0.5)) + 0.5;
    if (y < 454) s += line(683, y, 1244, y, GRID);
  }
  for (let x = 688.5; x < 1170; x += 48) s += line(x, 62, x, 454, GRID);

  s += curve([[710, 90], [757, 85.5], [805, 78], [853, 74.5], [881, 75], [928, 84], [950, 89.5], [997, 93.5], [1031, 91], [1073, 91], [1093, 92.5]], BLUE);
  s += curve([[709, 312], [757, 319.5], [805, 321], [853, 320], [902, 326], [950, 348], [997, 356.5], [1045, 347], [1079, 353]], BLUE);

  columns.forEach((c, k) => {
    const x = 888 + k * 48;
    const top = Math.round(priceY(c.bar[0] + 0.5)) + 1;
    s += rect(x - 7, top, 6, Math.round(priceY(c.bar[1] - 0.5)) - top, c.bar[2]);
    c.v.forEach((v, i) => {
      if (v === null) return;
      const y = Math.round(priceY(c.top - i + 0.5)) + 1;
      s += rect(x, y, 40, 13, shade(v));
      s += text(x + 38, y + 6, v, "num end");
    });
    const by = Math.round(priceY(c.box + 0.5));
    s += `<rect x="${x}" y="${by + 1}" width="40" height="13" fill="none" stroke="#000" stroke-width="2"/>`;
  });
  s += rect(887.5, 50.5, 41, 157, "none", "#000");

  // orders
  s += line(1103, 103, 1230, 103, "#00ffff", 2) + order(1031.5, 104, "Sell LMT", "#00ff00") + cancel(1229.5, 103);
  s += line(1102, 380, 1244, 380, "#deb887", 2) + pnl(1039, 381);
  s += "</g>";

  // totals row
  s += rect(683, 455, 561, 13, "#e1e1e1");
  totals.forEach((v, i) => {
    const x = 689 + i * 48;
    const c = Math.round(v > 0 ? Math.max(180, 252 - v * 0.052) : 253 + v * 0.04);
    s += rect(x, 455, 47, 13, v > 0 ? `rgb(${c},${Math.round(253 - v * 0.008)},${c})` : `rgb(255,${c},${c})`);
    s += line(x - 0.5, 455, x - 0.5, 468) + text(x + (v < 0 ? 45 : 46), 462, v, "num end");
  });
  s += line(1168.5, 455, 1168.5, 468) + line(683, 454.5, 1244, 454.5);

  // price axis
  s += line(1244.5, 62, 1244.5, 543) + line(1245, 75.5, 1250, 75.5);
  for (let p = 64; p <= 88; p += 2) {
    if (p === 70 || p === 72) continue;
    const y = Math.round(priceY(p));
    s += line(1245, y + 0.5, 1250, y + 0.5) + text(1252, y, "1,40" + p);
  }
  s += tag(1245, 92, "1,4091", BLUE) + tag(1245, 103, "1,4090", "#00ffff") + tag(1245, 355, "1,4072", BLUE);
  s += tag(1245, 380, "1,4070", "#deb887") + tag(1245, 394, "1,4069", "#000", "#fff");

  // volume
  ["14:00", "14:30", "15:00", "15:30", "16:00", "16:30"].forEach((t, i) => {
    const x = 757.5 + i * 96;
    s += line(x, 473, x, 542, GRID) + line(x, 543, x, 548) + text(x - 1, 555, t, "mid");
  });
  s += line(681, 472.5, 1299, 472.5) + line(683, 528.5, 1244, 528.5, "#a0a0a0");
  barTops.forEach((y, i) => s += rect(697 + i * 48, y, 25, 528 - y, "#00bfff"));
  s += line(683, 542.5, 1245, 542.5);
  s += fBox(1260.5, 480.5);
  s += line(1245, 487.5, 1250, 487.5) + text(1252, 488, "5000") + line(1245, 528.5, 1250, 528.5) + text(1252, 529, "0");
  s += tag(1245, 505, "2793", "#00bfff", "#000", 33);

  s += text(811, 69, "r(6B 06-18 (15 Min),2,20)");
  s += rect(689, 62, 123, 14, "#fff", "#e8e8e8") + text(693, 69, "©2010 Final Market Balance", "note");
  s += text(685, 490, "VolumeUpDown(6B 06-18 (15 Min))");
  s += text(685, 536, "© 2018 NinjaTrader, LLC");
  s += playIcon(1214.5, 67.5) + fBox(1260.5, 59.5);
  document.getElementById("deltaChart").innerHTML = s;
}

drawPriceChart();
drawDeltaChart();
```
